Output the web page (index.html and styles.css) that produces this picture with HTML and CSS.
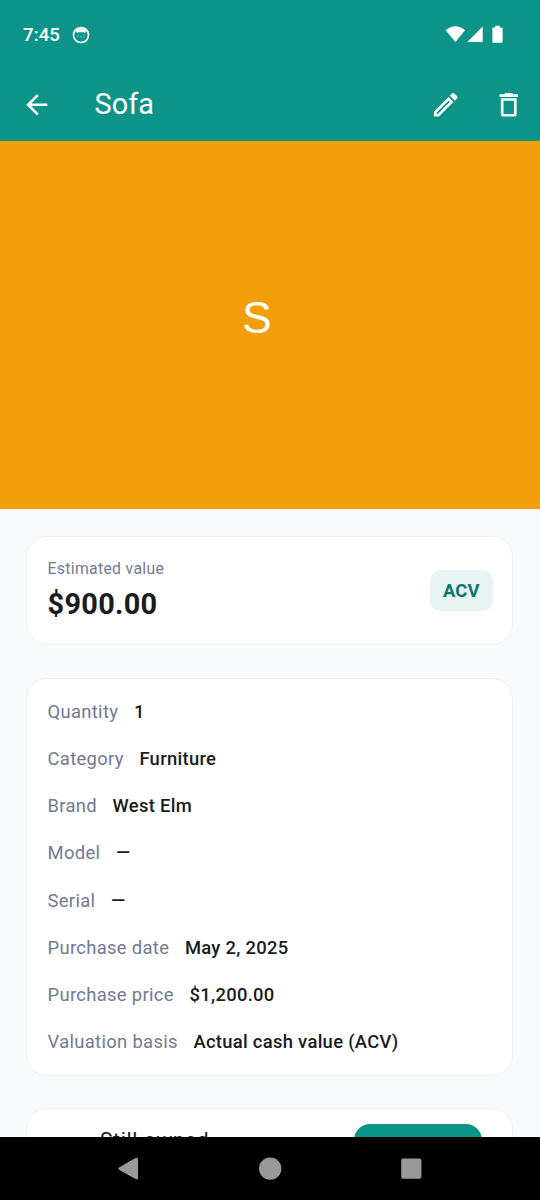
FILE: index.html
```html
<!DOCTYPE html>
<html lang="en">
<head>
<meta charset="utf-8">
<meta name="viewport" content="width=device-width">
<title>Sofa</title>
<link rel="stylesheet" href="styles.css">
</head>
<body>
<div class="screen">
  <header class="header">
    <div class="status">
      <span class="clock">7:45</span>
      <svg class="face" width="18" height="18" viewBox="0 0 18 18"><circle cx="9" cy="9" r="7.5" fill="none" stroke="#fff" stroke-width="1.7"/><path d="M3.5 4Q9 .5 14.5 4L13 7.3 11.9 6.2H6.1L5 7.3z" fill="#fff"/><path d="M5.6 9h1.2M11.2 9h1.2M5.2 11h1M11.8 11h1M8.2 11h1.6" stroke="#b8dfda" stroke-width=".8"/></svg>
      <svg class="signals" width="60" height="20" viewBox="0 0 60 20"><path d="M.7 5.2Q10.4-2.7 20.1 5.2L10.4 17z" fill="#fff"/><path d="M22.3 17L37.7 1.5V17z" fill="#fff"/><path d="M48.2 2.4h2V.7h4.600v1.7h2q.8 0 .8.8v13.700q0 .9-.8.9h-8.600q-.8 0-.8-.9V3.200q0-.8.8-.8z" fill="#fff"/></svg>
    </div>
    <div class="appbar">
      <svg class="icon" viewBox="0 0 24 24"><path d="M20 11H7.8l5.6-5.6L12 4l-8 8 8 8 1.4-1.4L7.8 13H20z"/></svg>
      <h1 class="title">Sofa</h1>
      <svg class="icon edit" viewBox="0 0 24 24"><path d="M14.06 9.02l.92.92L5.92 19H5v-.92l9.06-9.06M17.66 3c-.25 0-.51.1-.7.29l-1.83 1.83 3.75 3.75 1.83-1.83c.39-.39.39-1.02 0-1.41l-2.34-2.34c-.2-.2-.45-.29-.71-.29zm-3.6 3.19L3 17.25V21h3.75L17.81 9.94l-3.75-3.75z"/></svg>
      <svg class="icon" viewBox="0 0 24 24"><path fill-rule="evenodd" d="M9.5 3l-1 1H5v2h14V4h-3.500l-1-1zM6 7v12q0 2 2 2h8q2 0 2-2V7zM8 9h8v10H8z"/></svg>
    </div>
  </header>
  <div class="photo">S</div>
  <main class="content">
    <section class="card value-card">
      <div>
        <div class="caption">Estimated value</div>
        <div class="amount">$900.00</div>
      </div>
      <span class="tag">ACV</span>
    </section>
    <section class="card details">
      <div class="row"><span class="label">Quantity</span><span class="data">1</span></div>
      <div class="row"><span class="label">Category</span><span class="data">Furniture</span></div>
      <div class="row"><span class="label">Brand</span><span class="data">West Elm</span></div>
      <div class="row"><span class="label">Model</span><span class="data">—</span></div>
      <div class="row"><span class="label">Serial</span><span class="data">—</span></div>
      <div class="row"><span class="label">Purchase date</span><span class="data">May 2, 2025</span></div>
      <div class="row"><span class="label">Purchase price</span><span class="data">$1,200.00</span></div>
      <div class="row"><span class="label">Valuation basis</span><span class="data">Actual cash value (ACV)</span></div>
    </section>
    <section class="card owned">
      <span class="owned-text">Still owned</span>
      <span class="button"></span>
    </section>
  </main>
  <nav class="navbar">
    <svg width="540" height="63" viewBox="0 0 540 63" fill="#999"><path d="M119.5 30.2L135.5 21q2.6-1.2 2.6 1.5v18.3q0 2.6-2.6 1.3l-16-9.2q-2.4-1.3 0-2.7z"/><circle cx="270.2" cy="31.6" r="11.2"/><rect x="401.2" y="21.6" width="20.2" height="20.2" rx="1.8"/></svg>
  </nav>
</div>
</body>
</html>
```
FILE: styles.css
```css
* { box-sizing: border-box; }
body { margin: 0; font-family: Roboto, sans-serif; color: #191c1c; }
.screen { width: 540px; height: 1200px; display: flex; flex-direction: column; overflow: hidden; background: #f9fafc; }
.header { flex: none; height: 141px; background: #0d9488; color: #fff; }
.status { height: 68px; display: flex; align-items: center; padding: 1px 35px 0 23px; }
.clock { font-size: 18.6px; font-weight: 500; letter-spacing: .1px; }
.face { margin-left: 12px; }
.signals { margin-left: auto; }
.appbar { height: 73px; display: flex; align-items: center; padding: 0 16px 0 21px; }
.icon { width: 31.5px; height: 31.5px; flex: none; fill: #fff; }
.title { margin: 0 auto 0 42px; padding-bottom: 2px; font-size: 28.9px; line-height: 36px; font-weight: 400; }
.edit { margin-right: 31.5px; }
.photo { flex: none; height: 367.5px; padding-right: 26px; display: flex; align-items: center; justify-content: center; background: #f39f0c; color: #fff; font-family: "Liberation Sans", sans-serif; font-size: 44px; padding-bottom: 14px; }
.content { flex: 1; min-height: 0; overflow: hidden; padding: 27px 27px 0 26px; display: flex; flex-direction: column; gap: 32.5px; }
.card { flex: none; background: #fff; border: 1px solid #eff1f3; border-radius: 21px; }
.value-card { height: 109.5px; padding: 0 19.5px 0 20.5px; display: flex; align-items: center; justify-content: space-between; }
.caption { font-size: 15.75px; line-height: 21px; letter-spacing: .33px; color: #717a94; }
.amount { margin-top: 7px; font-size: 28.9px; line-height: 37px; font-weight: 700; letter-spacing: .3px; }
.tag { width: 62.5px; height: 41px; border-radius: 10.5px; display: flex; align-items: center; justify-content: center; background: #e7f4f3; color: #0f766e; font-size: 18.4px; font-weight: 700; letter-spacing: .13px; }
.details { height: 398px; padding: 9.6px 20.5px; }
.row { height: 47.25px; display: flex; align-items: center; gap: 15.6px; font-size: 18.4px; line-height: 26.25px; letter-spacing: .33px; }
.label { color: #717a94; }
.data { font-weight: 500; letter-spacing: .3px; }
.owned { height: 100px; padding: 15px 30px 0 73px; display: flex; justify-content: space-between; }
.owned-text { margin-top: 1px; font-size: 21px; line-height: 31px; letter-spacing: .65px; }
.button { width: 128px; height: 52px; border-radius: 16px; background: #0d9488; }
.navbar { flex: none; height: 63px; background: #000; }
.navbar svg { display: block; }
```
